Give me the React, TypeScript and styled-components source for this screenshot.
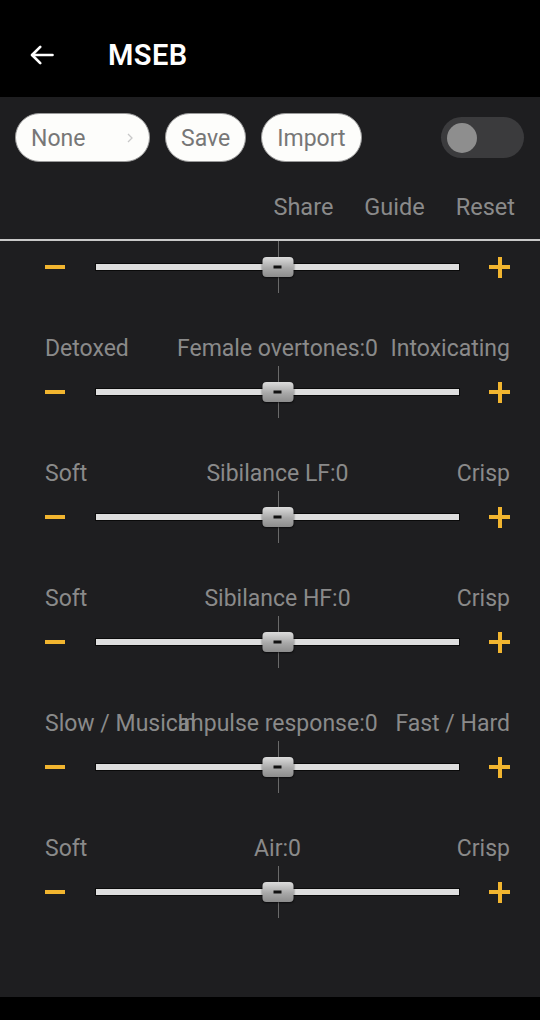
import { FC } from "react";
import styled, { createGlobalStyle } from "styled-components";

const GlobalStyle = createGlobalStyle`
    html, body {
        margin: 0;
        padding: 0;
        background: #000;
    }
    body {
        font-family: Roboto, "Liberation Sans", sans-serif;
    }
`;

type Band = {
    left?: string;
    center?: string;
    right?: string;
};

const bands: Band[] = [
    {},
    { left: "Detoxed", center: "Female overtones:0", right: "Intoxicating" },
    { left: "Soft", center: "Sibilance LF:0", right: "Crisp" },
    { left: "Soft", center: "Sibilance HF:0", right: "Crisp" },
    { left: "Slow / Musical", center: "Impulse response:0", right: "Fast / Hard" },
    { left: "Soft", center: "Air:0", right: "Crisp" },
];

const BackArrow: FC = () => (
    <svg width="28" height="28" viewBox="0 0 24 24" fill="none" stroke="#fff" strokeWidth="2.3" strokeLinecap="round" strokeLinejoin="round">
        <path d="M21 12H3.5" />
        <path d="M10.5 5l-7 7 7 7" />
    </svg>
);

const Chevron: FC = () => (
    <svg width="8" height="12" viewBox="0 0 8 12" fill="none" stroke="#c8c8c8" strokeWidth="1.3">
        <path d="M2 2l4 4-4 4" />
    </svg>
);

const SliderRow: FC<{ band: Band }> = ({ band }) => {
    const hasLabels = band.left || band.center || band.right;
    return (
        <Row>
            {hasLabels && (
                <Labels>
                    <Label align="start">{band.left}</Label>
                    <Label align="center">{band.center}</Label>
                    <Label align="end">{band.right}</Label>
                </Labels>
            )}
            <SliderBox>
                <Minus />
                <Track>
                    <CenterLine />
                    <Thumb />
                </Track>
                <Plus />
            </SliderBox>
        </Row>
    );
};

export default function App() {
    return (
        <Root>
            <GlobalStyle />
            <Header>
                <BackArrow />
                <Title>MSEB</Title>
            </Header>
            <Main>
                <PillRow>
                    <Pill width={135}>
                        None
                        <PillSpacer />
                        <Chevron />
                    </Pill>
                    <Pill>Save</Pill>
                    <Pill>Import</Pill>
                    <Toggle>
                        <Knob />
                    </Toggle>
                </PillRow>
                <LinkRow>
                    <Link>Share</Link>
                    <Link>Guide</Link>
                    <Link>Reset</Link>
                </LinkRow>
                <Divider />
                <List>
                    {bands.map((b, i) => (
                        <SliderRow key={i} band={b} />
                    ))}
                </List>
            </Main>
            <BottomBar />
        </Root>
    );
}

const Root = styled.div`
    width: 540px;
    height: 1020px;
    display: flex;
    flex-direction: column;
    background: #000;
    overflow: hidden;
`;

const Header = styled.div`
    height: 97px;
    flex-shrink: 0;
    display: flex;
    flex-direction: row;
    align-items: center;
    padding: 13px 0 0 28px;
    box-sizing: border-box;
    gap: 52px;
`;

const Title = styled.div`
    color: #fff;
    font-size: 29px;
    font-weight: 600;
    letter-spacing: 0.4px;
`;

const Main = styled.div`
    flex: 1;
    background: #1e1e20;
    display: flex;
    flex-direction: column;
    overflow: hidden;
`;

const PillRow = styled.div`
    display: flex;
    flex-direction: row;
    align-items: center;
    gap: 15px;
    padding: 16px 16px 0 15px;
    height: 49px;
    box-sizing: content-box;
`;

const Pill = styled.div<{ width?: number }>`
    height: 49px;
    box-sizing: border-box;
    ${(p) => (p.width ? `width: ${p.width}px;` : "")}
    padding: 1px 15px 0;
    border-radius: 25px;
    background: #fdfdfb;
    border: 1px solid #9a9a9a;
    color: #777;
    font-size: 23px;
    display: flex;
    flex-direction: row;
    align-items: center;
`;

const PillSpacer = styled.div`
    flex: 1;
`;

const Toggle = styled.div`
    margin-left: auto;
    width: 83px;
    height: 41px;
    border-radius: 21px;
    background: #3b3b3d;
    display: flex;
    align-items: center;
    padding-left: 6px;
    box-sizing: border-box;
`;

const Knob = styled.div`
    width: 30px;
    height: 30px;
    border-radius: 50%;
    background: #8e8e8e;
`;

const LinkRow = styled.div`
    display: flex;
    flex-direction: row;
    justify-content: flex-end;
    gap: 31px;
    padding: 30px 25px 0 0;
    height: 30px;
    margin-bottom: 17px;
    box-sizing: content-box;
`;

const Link = styled.div`
    color: #8a8a8a;
    font-size: 23.5px;
    line-height: 30px;
`;

const Divider = styled.div`
    height: 2px;
    background: #c8c8c8;
    flex-shrink: 0;
`;

const List = styled.div`
    display: flex;
    flex-direction: column;
`;

const Row = styled.div`
    display: flex;
    flex-direction: column;
    padding: 0 30px 41px 45px;
`;

const Labels = styled.div`
    display: grid;
    height: 28px;
    margin-bottom: 4px;
    & > * {
        grid-area: 1 / 1;
    }
`;

const Label = styled.div<{ align: "start" | "center" | "end" }>`
    justify-self: ${(p) => p.align};
    color: #8a8a8a;
    font-size: 23px;
    line-height: 30px;
    white-space: nowrap;
`;

const SliderBox = styled.div`
    height: 52px;
    display: flex;
    flex-direction: row;
    align-items: center;
`;

const Minus = styled.div`
    width: 20px;
    height: 4px;
    background: #f2b52f;
    margin-right: 31px;
`;

const Plus = styled.div`
    width: 21px;
    height: 21px;
    margin-left: 30px;
    position: relative;
    &::before,
    &::after {
        content: "";
        position: absolute;
        background: #f2b52f;
    }
    &::before {
        left: 0;
        right: 0;
        top: 8.5px;
        height: 4px;
    }
    &::after {
        top: 0;
        bottom: 0;
        left: 8.5px;
        width: 4px;
    }
`;

const Track = styled.div`
    flex: 1;
    height: 6px;
    background: #dedede;
    box-shadow: 0 0 0 1px #0a0a0a;
    position: relative;
`;

const CenterLine = styled.div`
    position: absolute;
    left: 50%;
    top: -23px;
    width: 1px;
    height: 52px;
    background: #6a6a6a;
`;

const Thumb = styled.div`
    position: absolute;
    left: 50%;
    top: 50%;
    width: 31px;
    height: 20px;
    transform: translate(-50%, -50%);
    border-radius: 4px;
    background: linear-gradient(#dcdcdc, #a8a8a8 55%, #8c8c8c);
    box-shadow: 0 1px 2px rgba(0, 0, 0, 0.6);
    &::after {
        content: "";
        position: absolute;
        left: 50%;
        top: 50%;
        width: 8px;
        height: 3px;
        transform: translate(-50%, -50%);
        background: #111;
    }
`;

const BottomBar = styled.div`
    height: 23px;
    flex-shrink: 0;
    background: #000;
`;
